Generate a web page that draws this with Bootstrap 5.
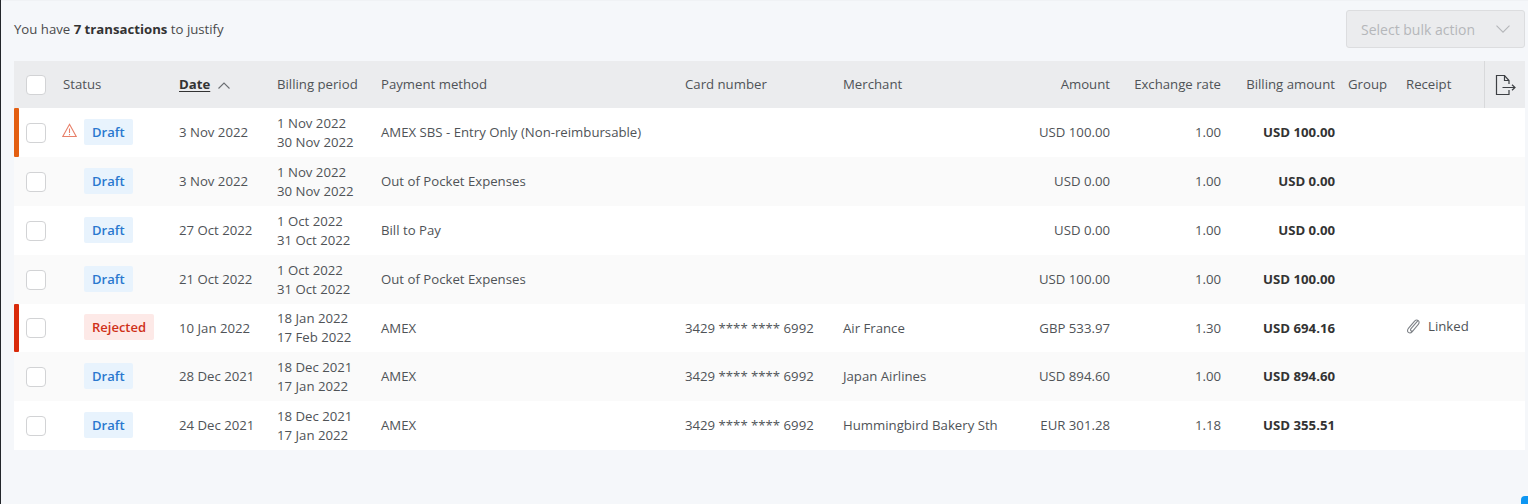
<!DOCTYPE html>
<html lang="en">
<head>
<meta charset="utf-8">
<title>Transactions</title>
<link href="https://cdn.jsdelivr.net/npm/bootstrap@5.3.0/dist/css/bootstrap.min.css" rel="stylesheet">
<style>
html,body{height:504px;overflow:hidden}
body{font-family:"Open Sans",sans-serif;font-size:13.2px;color:#4a4a4a;background:#f5f7fa;border-left:1px solid #23262b;position:relative}
.topbar{height:61px;padding:0 3px 4px 13px;border-top:1px solid #f0f2f5}
.topbar b{color:#333;font-weight:700}
.intro{position:relative;top:1px}
.bulk{width:179px;height:38px;background:#ebecee;border:1px solid #dcdddf;border-radius:3px;color:#b5b7ba;font-size:14px;padding:0 14px}
.tx{table-layout:fixed;width:1511px;margin:0 0 0 13px;border-collapse:collapse}
.tx th{height:47px;background:#ebecee;font-weight:400;color:#4f5357;padding:0 8px;vertical-align:middle;white-space:nowrap;border:0}
.tx td{height:49px;padding:0 8px;vertical-align:middle;white-space:nowrap;border:0;color:#4f5357;line-height:19px;background:#fff}
.tx tbody tr:nth-child(5) td{height:48px}
.tx tbody tr:nth-child(even) td{background:#fafafa}
.tx td.money{font-weight:700;color:#333}
.tx .c11,.tx .groupcell{padding-left:5px}
.sortcol{font-weight:700;color:#333;text-decoration:underline;text-underline-offset:2px}
.flag{position:relative}
.flag::before{content:"";position:absolute;left:0;top:0;bottom:0;width:5px;border-radius:1px}
.flag-o::before{background:#e35f12}
.flag-r::before{background:#d92b0b}
.box{display:block;width:20px;height:20px;background:#fff;border:1px solid #d2d3d5;border-radius:4px;margin-left:4px}
.pill{display:inline-block;height:26px;line-height:26px;padding:0 8px;border-radius:2px;font-weight:600;font-size:13px;vertical-align:middle;position:relative;top:-1px}
.pill-d{background:#e8f3fd;color:#2a78cf}
.pill-r{background:#fde9e7;color:#cf3018}
.statuswrap{padding-left:21px}
.statusicon{position:absolute;left:7px;top:50%;margin-top:-10px}
.statuscell{position:relative}
.xcol{border-left:1px solid #d8d9db!important;text-align:center}
.fab{position:absolute;right:0;bottom:0;width:7px;height:8px;background:#0d96f2;border-top-left-radius:4px}
.c1{width:41px}.c2{width:116px}.c3{width:98px}.c4{width:104px}.c5{width:304px}.c6{width:158px}.c7{width:183px}.c8{width:100px}.c9{width:111px}.c10{width:114px}.c11{width:55px}.c12{width:86px}.c13{width:41px}
</style>
</head>
<body>
<div class="topbar d-flex align-items-center justify-content-between">
  <span class="intro">You have <b>7 transactions</b> to justify</span>
  <div class="bulk d-flex align-items-center justify-content-between">
    <span>Select bulk action</span>
    <svg width="14" height="8" viewBox="0 0 14 8" fill="none" stroke="#b5b7ba" stroke-width="1.1"><path d="M.5.7 7 7.2 13.5.7"/></svg>
  </div>
</div>
<table class="tx">
<thead><tr>
<th class="c1"><span class="box"></span></th>
<th class="c2">Status</th>
<th class="c3"><span class="sortcol">Date</span> <svg class="ms-1" width="12" height="7" viewBox="0 0 12 7" fill="none" stroke="#6b6e72" stroke-width="1.1"><path d="M.5 6.500 6 1l5.500 5.500"/></svg></th>
<th class="c4">Billing period</th>
<th class="c5">Payment method</th>
<th class="c6">Card number</th>
<th class="c7">Merchant</th>
<th class="c8 text-end">Amount</th>
<th class="c9 text-end">Exchange rate</th>
<th class="c10 text-end">Billing amount</th>
<th class="c11">Group</th>
<th class="c12">Receipt</th>
<th class="c13 xcol p-0"><svg width="22" height="22" viewBox="0 0 22 22" fill="none" stroke="#3d4044" stroke-width="1.2"><path d="M15 10V6.500L10.500 1.500H2.500v19H15V16"/><path d="M10.500 1.500v5H15"/><path d="M8.500 13.500H21M18 10.800l3 2.700-3 2.700"/></svg></th>
</tr></thead>
<tbody>
<tr>
<td class="flag flag-o"><span class="box"></span></td>
<td class="statuscell"><svg class="statusicon" width="15" height="15" viewBox="0 0 15 15" fill="none" stroke="#e8806a" stroke-width="1.1"><path d="M7.500 1.300 14.200 13.500H.8z"/><path d="M7.500 5.500v4.500M7.500 11v1.200"/></svg><span class="statuswrap"><span class="pill pill-d">Draft</span></span></td>
<td>3 Nov 2022</td><td>1 Nov 2022<br>30 Nov 2022</td><td>AMEX SBS - Entry Only (Non-reimbursable)</td><td></td><td></td>
<td class="text-end">USD 100.00</td><td class="text-end">1.00</td><td class="text-end money">USD 100.00</td><td></td><td></td><td></td>
</tr>
<tr>
<td><span class="box"></span></td>
<td><span class="statuswrap"><span class="pill pill-d">Draft</span></span></td>
<td>3 Nov 2022</td><td>1 Nov 2022<br>30 Nov 2022</td><td>Out of Pocket Expenses</td><td></td><td></td>
<td class="text-end">USD 0.00</td><td class="text-end">1.00</td><td class="text-end money">USD 0.00</td><td></td><td></td><td></td>
</tr>
<tr>
<td><span class="box"></span></td>
<td><span class="statuswrap"><span class="pill pill-d">Draft</span></span></td>
<td>27 Oct 2022</td><td>1 Oct 2022<br>31 Oct 2022</td><td>Bill to Pay</td><td></td><td></td>
<td class="text-end">USD 0.00</td><td class="text-end">1.00</td><td class="text-end money">USD 0.00</td><td></td><td></td><td></td>
</tr>
<tr>
<td><span class="box"></span></td>
<td><span class="statuswrap"><span class="pill pill-d">Draft</span></span></td>
<td>21 Oct 2022</td><td>1 Oct 2022<br>31 Oct 2022</td><td>Out of Pocket Expenses</td><td></td><td></td>
<td class="text-end">USD 100.00</td><td class="text-end">1.00</td><td class="text-end money">USD 100.00</td><td></td><td></td><td></td>
</tr>
<tr>
<td class="flag flag-r"><span class="box"></span></td>
<td><span class="statuswrap"><span class="pill pill-r">Rejected</span></span></td>
<td>10 Jan 2022</td><td>18 Jan 2022<br>17 Feb 2022</td><td>AMEX</td><td>3429 **** **** 6992</td><td>Air France</td>
<td class="text-end">GBP 533.97</td><td class="text-end">1.30</td><td class="text-end money">USD 694.16</td><td></td>
<td colspan="2"><span class="d-inline-flex align-items-center gap-2"><svg width="14" height="15" viewBox="0 0 14 15" fill="none" stroke="#7d8186" stroke-width="1.1" stroke-linecap="round"><path d="M11.500 2.200 5 9.600c-.7.8-.6 1.700 0 2.200.6.5 1.500.4 2.100-.3l5.200-6.200c1.200-1.400 1-2.900 0-3.700-1-.8-2.500-.7-3.700.6L2.600 9.200c-1.500 1.800-1.300 3.400-.2 4.200 1.100.8 2.700.6 3.900-.8L11 7"/></svg>Linked</span></td>
<td></td>
</tr>
<tr>
<td><span class="box"></span></td>
<td><span class="statuswrap"><span class="pill pill-d">Draft</span></span></td>
<td>28 Dec 2021</td><td>18 Dec 2021<br>17 Jan 2022</td><td>AMEX</td><td>3429 **** **** 6992</td><td>Japan Airlines</td>
<td class="text-end">USD 894.60</td><td class="text-end">1.00</td><td class="text-end money">USD 894.60</td><td></td><td></td><td></td>
</tr>
<tr>
<td><span class="box"></span></td>
<td><span class="statuswrap"><span class="pill pill-d">Draft</span></span></td>
<td>24 Dec 2021</td><td>18 Dec 2021<br>17 Jan 2022</td><td>AMEX</td><td>3429 **** **** 6992</td><td>Hummingbird Bakery Sth</td>
<td class="text-end">EUR 301.28</td><td class="text-end">1.18</td><td class="text-end money">USD 355.51</td><td></td><td></td><td></td>
</tr>
</tbody>
</table>
<div class="fab"></div>
<script src="https://cdn.jsdelivr.net/npm/bootstrap@5.3.0/dist/js/bootstrap.bundle.min.js"></script>
</body>
</html>
